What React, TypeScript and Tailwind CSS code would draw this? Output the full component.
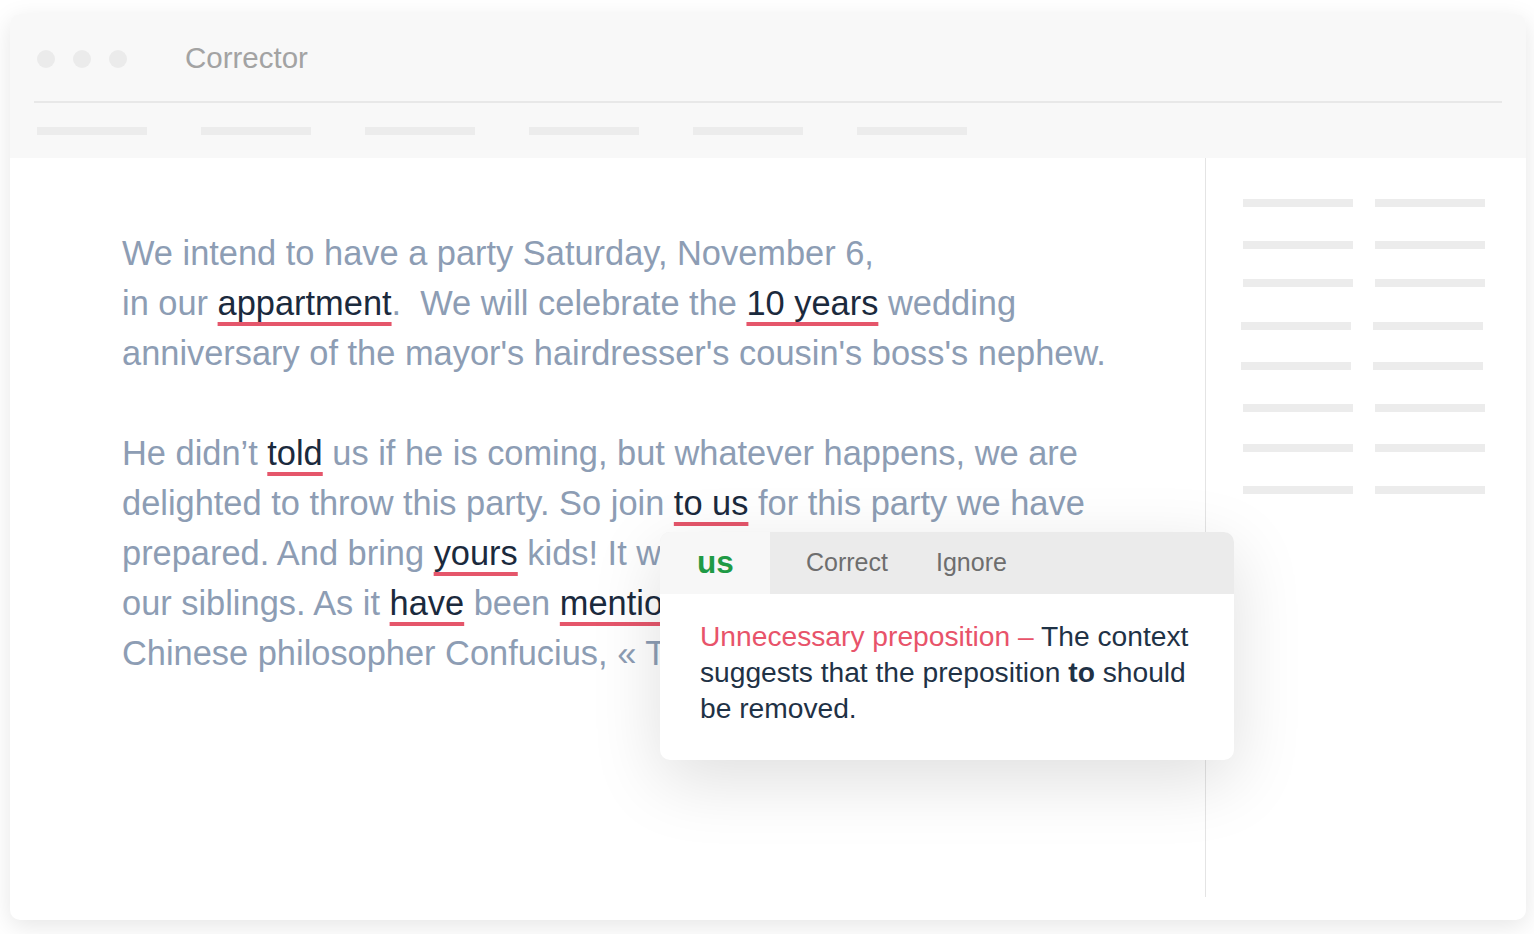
const font = { fontFamily: '"Liberation Sans", Arial, sans-serif' }

function Err({ children }: { children: React.ReactNode }) {
  return (
    <span className="text-[#1b2a3d] underline decoration-[#e5566b] decoration-[4px] underline-offset-[7px] [text-decoration-skip-ink:none]">
      {children}
    </span>
  )
}

const navBars = [0, 1, 2, 3, 4, 5]
const sideRows = [
  { mt: 'mt-[40px]', shift: '' },
  { mt: 'mt-[34px]', shift: '' },
  { mt: 'mt-[30px]', shift: '' },
  { mt: 'mt-[35px]', shift: '-ml-[2px]' },
  { mt: 'mt-[32px]', shift: '-ml-[2px]' },
  { mt: 'mt-[34px]', shift: '' },
  { mt: 'mt-[32px]', shift: '' },
  { mt: 'mt-[34px]', shift: '' },
]

export default function App() {
  return (
    <div className="w-[1534px] h-[934px] bg-white overflow-hidden" style={font}>
      <div className="ml-[10px] mt-[14px] w-[1516px] h-[906px] rounded-[10px] bg-white shadow-[0_6px_24px_rgba(0,0,0,0.10)] flex flex-col overflow-hidden">
        {/* title bar */}
        <div className="h-[144px] bg-[#f8f8f8] px-[24px] flex flex-col">
          <div className="h-[87px] flex items-center">
            <div className="flex gap-[18px] ml-[3px] mt-[2px]">
              <span className="w-[18px] h-[18px] rounded-full bg-[#ebebeb]" />
              <span className="w-[18px] h-[18px] rounded-full bg-[#ebebeb]" />
              <span className="w-[18px] h-[18px] rounded-full bg-[#ebebeb]" />
            </div>
            <span className="ml-[58px] mt-[1px] text-[29.5px] text-[#a3a3a3]">Corrector</span>
          </div>
          <div className="h-[2px] bg-[#e8e8e8]" />
          <div className="flex gap-[54px] mt-[24px] ml-[3px]">
            {navBars.map(i => (
              <span key={i} className="w-[110px] h-[8px] bg-[#ececec]" />
            ))}
          </div>
        </div>

        {/* body */}
        <div className="flex-1 flex relative">
          <div className="w-[1195px] pt-[70px] pl-[112px] text-[34.4px] leading-[50px] text-[#8d9db4] whitespace-nowrap">
            <p>We intend to have a party Saturday, November 6,</p>
            <p>
              in our <Err>appartment</Err>.&nbsp; We will celebrate the <Err>10 years</Err> wedding
            </p>
            <p>anniversary of the mayor's hairdresser's cousin's boss's nephew.</p>
            <p className="mt-[50px]">
              He didn’t <Err>told</Err> us if he is coming, but whatever happens, we are
            </p>
            <p>
              delighted to throw this party. So join <Err>to us</Err> for this party we have
            </p>
            <p>
              prepared. And bring <Err>yours</Err> kids! It will be fun to see all of
            </p>
            <p>
              our siblings. As it <Err>have</Err> been <Err>mentionned</Err> by the famous
            </p>
            <p>Chinese philosopher Confucius, « The more you know »</p>
          </div>

          <div className="w-[1px] h-[739px] bg-[#e4e4e4]" />

          <div className="flex-1 pl-[37px] pt-[1px]">
            {sideRows.map((r, i) => (
              <div key={i} className={`flex gap-[22px] ${r.mt} ${r.shift}`}>
                <span className="w-[110px] h-[8px] bg-[#ececec]" />
                <span className="w-[110px] h-[8px] bg-[#ececec]" />
              </div>
            ))}
          </div>

          {/* suggestion popover */}
          <div className="absolute left-[650px] top-[374px] w-[574px] h-[228px] rounded-[10px] bg-white shadow-[0_20px_70px_rgba(0,0,0,0.13)] overflow-hidden">
            <div className="h-[62px] flex items-center bg-[#ebebeb]">
              <div className="w-[110px] h-full bg-[#f7f7f7] flex items-center pl-[37px]">
                <span className="text-[31.5px] font-bold text-[#1f9a45]">us</span>
              </div>
              <span className="ml-[36px] text-[25px] text-[#6e6e6e]">Correct</span>
              <span className="ml-[48px] text-[25px] text-[#6e6e6e]">Ignore</span>
            </div>
            <p className="pl-[40px] pt-[24px] text-[28.2px] leading-[36px] text-[#1f3246] whitespace-nowrap">
              <span className="text-[#e8536a]">Unnecessary preposition –</span> The context
              <br />
              suggests that the preposition <b>to</b> should
              <br />
              be removed.
            </p>
          </div>
        </div>
      </div>
    </div>
  )
}
